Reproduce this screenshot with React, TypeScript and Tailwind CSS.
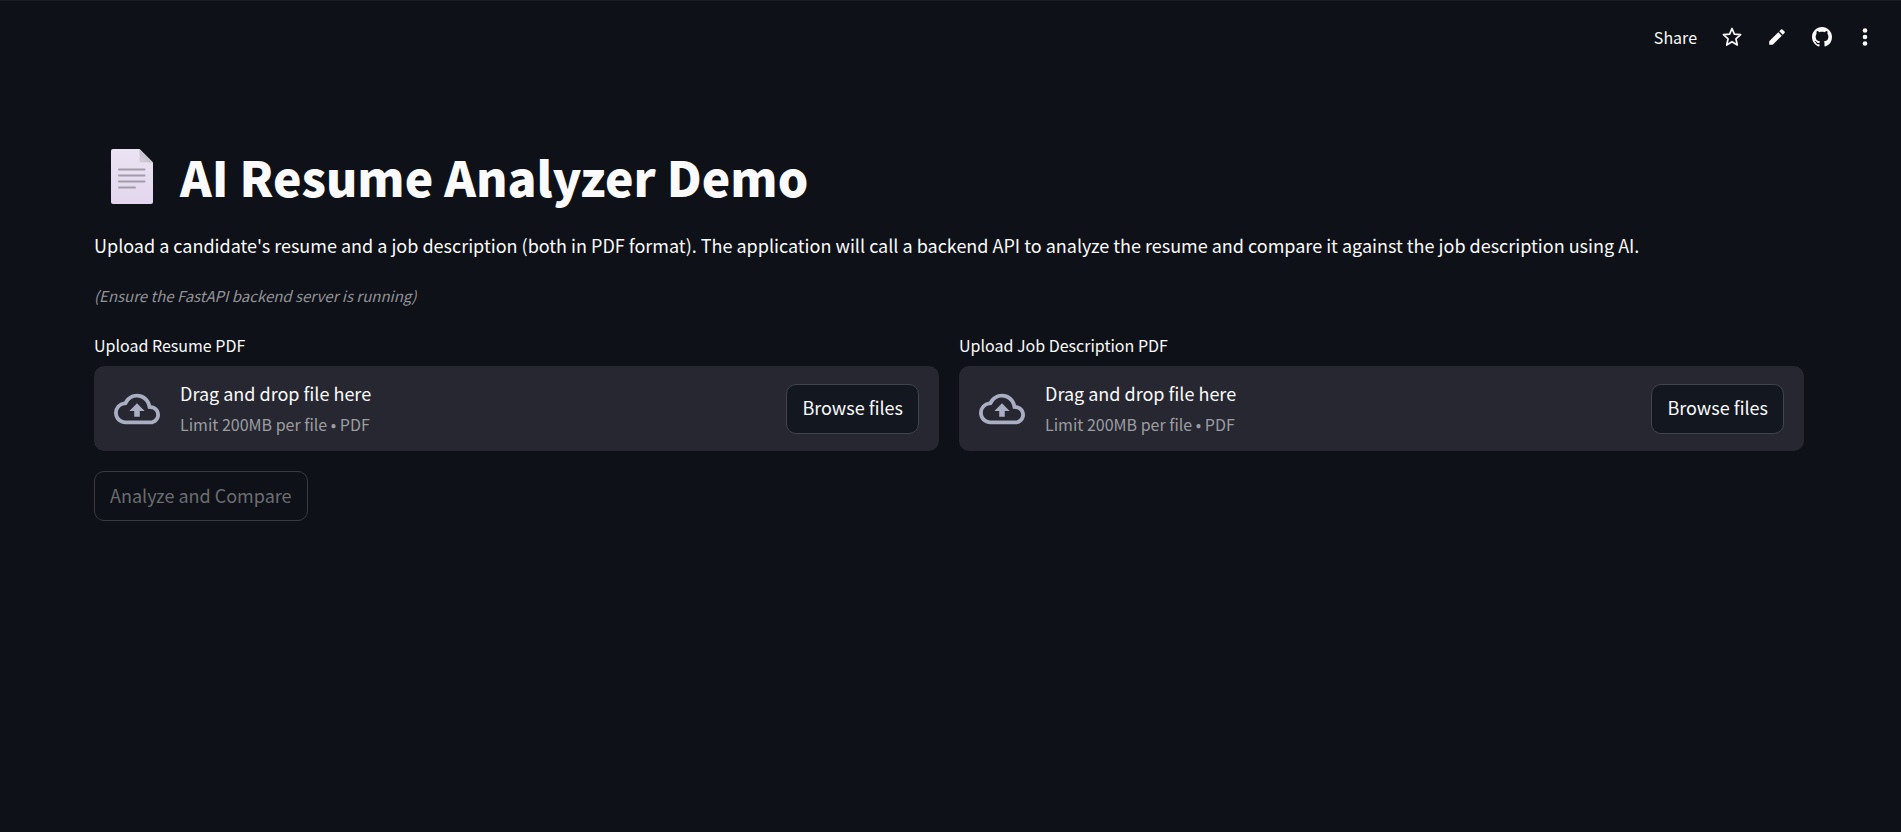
import { useId } from "react";
import { MdOutlineCloudUpload } from "react-icons/md";

function PageIcon() {
  return (
    <svg viewBox="0 0 42 55" className="ml-[17px] h-[55px] w-[42px] shrink-0" role="img" aria-label="Page">
      <defs>
        <linearGradient id="paper" x1="0" y1="0" x2="0" y2="1">
          <stop offset="0" stopColor="#ebe4f3" />
          <stop offset="1" stopColor="#e2d6ee" />
        </linearGradient>
        <linearGradient id="fold" x1="0" y1="1" x2="1" y2="0">
          <stop offset="0" stopColor="#d5cfdb" />
          <stop offset="1" stopColor="#b9b4be" />
        </linearGradient>
      </defs>
      <path d="M2 0H28.500L42 13.500V53a2 2 0 0 1-2 2H2a2 2 0 0 1-2-2V2a2 2 0 0 1 2-2Z" fill="url(#paper)" />
      <path d="M28.500 0L42 13.500H30a1.500 1.500 0 0 1-1.500-1.500Z" fill="url(#fold)" />
      <path d="M8 20.500H33.500M8 26.500H33.500M8 32.500H33.500M8 38.500H24" stroke="#a29ba8" strokeWidth="2" strokeLinecap="round" fill="none" />
    </svg>
  );
}

function Toolbar() {
  return (
    <header className="flex h-[72px] items-center justify-end pr-6 text-[16px]">
      <button type="button" className="mr-[25px]">Share</button>
      <button type="button" aria-label="Favorite" className="mr-[25px]">
        <svg viewBox="0 0 20 20" className="size-5" fill="none" stroke="currentColor" strokeWidth="1.700" strokeLinejoin="round">
          <path d="M10 1.500L12.400 7.200L18.600 7.700L13.900 11.800L15.300 18L10 14.700L4.700 18L6.100 11.800L1.400 7.700L7.600 7.200Z" />
        </svg>
      </button>
      <button type="button" aria-label="Edit" className="mr-[25px]">
        <svg viewBox="0 0 20 20" className="size-5" fill="currentColor">
          <path d="M2.200 14.300V17.800H5.700L14.800 8.700L11.300 5.200ZM17.500 6A1 1 0 0 0 17.500 4.600L15.400 2.500A1 1 0 0 0 14 2.500L12.300 4.200L15.800 7.700Z" />
        </svg>
      </button>
      <button type="button" aria-label="View source on GitHub" className="mr-[21px]">
        <svg viewBox="0 0 16 16" className="size-5" fill="currentColor">
          <path d="M8 0C3.580 0 0 3.580 0 8c0 3.540 2.290 6.530 5.470 7.590.4.070.55-.17.55-.38 0-.19-.01-.82-.01-1.490-2.010.37-2.530-.49-2.690-.94-.09-.23-.48-.94-.82-1.130-.28-.15-.68-.52-.01-.53.63-.01 1.080.58 1.230.82.72 1.210 1.870.87 2.330.66.07-.52.28-.87.51-1.070-1.780-.2-3.640-.89-3.640-3.950 0-.87.31-1.590.82-2.150-.08-.2-.36-1.020.08-2.120 0 0 .67-.21 2.200.82.64-.18 1.320-.27 2-.27s1.360.09 2 .27c1.530-1.040 2.200-.82 2.200-.82.44 1.100.16 1.920.08 2.120.51.56.82 1.270.82 2.150 0 3.070-1.870 3.750-3.650 3.950.29.25.54.73.54 1.480 0 1.070-.01 1.930-.01 2.200 0 .21.15.46.55.38A8.010 8.010 0 0 0 16 8c0-4.420-3.580-8-8-8Z" />
        </svg>
      </button>
      <button type="button" aria-label="Menu">
        <svg viewBox="0 0 24 20" className="h-5 w-6" fill="currentColor">
          <circle cx="12" cy="3.500" r="2.300" />
          <circle cx="12" cy="10" r="2.300" />
          <circle cx="12" cy="16.500" r="2.300" />
        </svg>
      </button>
    </header>
  );
}

function Uploader({ label }: { label: string }) {
  const id = useId();
  return (
    <div className="min-w-0 flex-1">
      <label htmlFor={id} className="mb-1.5 block text-[16px] leading-[30px]">{label}</label>
      <section className="flex items-center rounded-[10px] bg-[#262730] px-5">
        <MdOutlineCloudUpload className="mr-5 size-[46px] shrink-0 text-[#a9aec3]" aria-hidden />
        <div className="flex-1 pt-3 pb-[11px]">
          <div className="text-[18px] leading-[30px]">Drag and drop file here</div>
          <div className="text-[16px] leading-8 text-[#9c9da1]">Limit 200MB per file • PDF</div>
        </div>
        <button id={id} type="button" className="h-[50px] rounded-[10px] border border-[#41444c] bg-[#131720] px-[15px] pb-0.5 text-[18px]">
          Browse files
        </button>
      </section>
    </div>
  );
}

export default function App() {
  return (
    <div className="min-h-screen border-t border-[#1b1e23] bg-[#0e1117] font-['Noto_Sans_CJK_JP','Noto_Sans_CJK_SC',sans-serif] text-[#fafafa]">
      <Toolbar />
      <main className="pt-[62px] pr-[97px] pl-[94px]">
        <h1 className="flex h-[82px] items-center gap-[27px] text-[48px] leading-[66px] font-black">
          <PageIcon />
          <span>AI Resume Analyzer Demo</span>
        </h1>
        <p className="mt-3 text-[18px] leading-8">
          Upload a candidate's resume and a job description (both in PDF format). The application will call a backend API to
          analyze the resume and compare it against the job description using AI.
        </p>
        <p className="mt-[21px] text-[15px] leading-7 text-[#929397] italic">(Ensure the FastAPI backend server is running)</p>
        <div className="mt-5 flex gap-5">
          <Uploader label="Upload Resume PDF" />
          <Uploader label="Upload Job Description PDF" />
        </div>
        <button type="button" disabled className="mt-5 h-[50px] rounded-[10px] border border-[#393b40] px-[15px] pb-0.5 text-[18px] text-[#6b6d71]">
          Analyze and Compare
        </button>
      </main>
    </div>
  );
}
